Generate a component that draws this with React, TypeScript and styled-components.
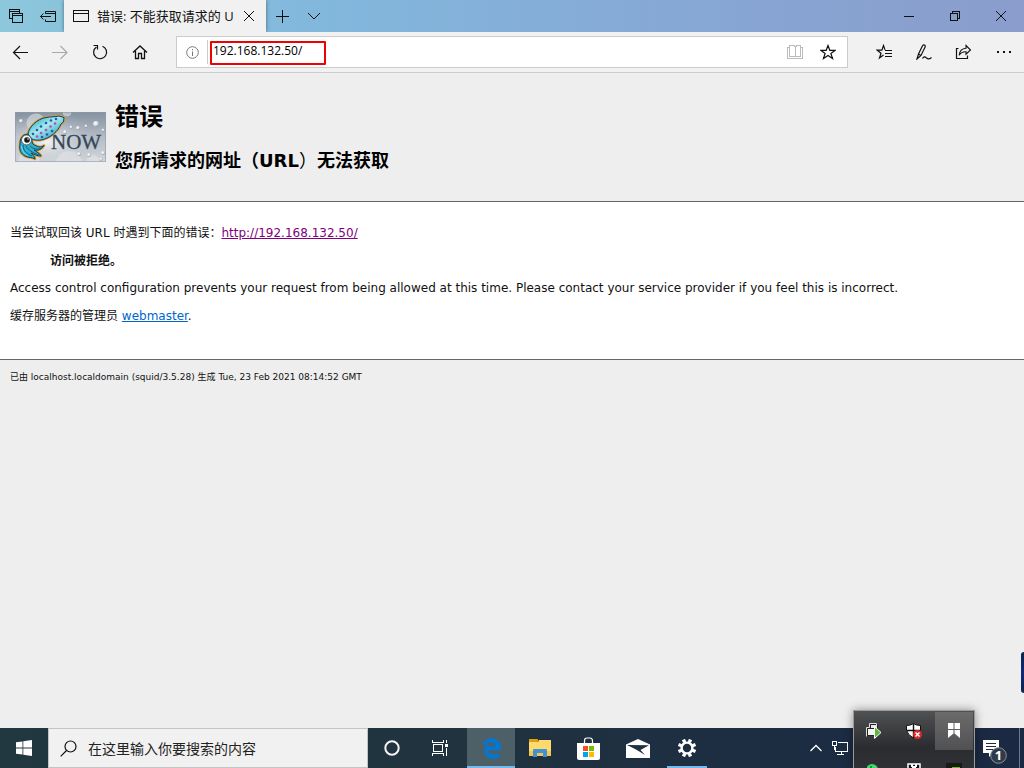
import React from "react";
import styled, { createGlobalStyle } from "styled-components";
import { FaEdgeLegacy } from "react-icons/fa6";

const GlobalStyle = createGlobalStyle`
  * { box-sizing: border-box; }
  html, body { margin: 0; padding: 0; }
  body {
    font-family: "DejaVu Sans", "Noto Sans CJK SC", sans-serif;
    font-size: 12px;
    color: #111;
    background: #eee;
  }
  button, input { font: inherit; color: inherit; border: 0; padding: 0; margin: 0; background: none; border-radius: 0; }
  svg { display: block; }
`;

const uiFont = `"Open Sans", "Noto Sans CJK SC", sans-serif`;

const Desktop = styled.div`
  position: relative;
  display: flex;
  flex-direction: column;
  min-height: 100vh;
  overflow: hidden;
`;

const TitleBar = styled.header`
  display: flex;
  height: 32px;
  background: linear-gradient(90deg, #8cc7dc 0%, #82b7dc 32%, #87a4d2 75%, #8a9dcc 100%);
  font-family: ${uiFont};
`;

const BarButton = styled.button<{ $width: number }>`
  display: flex;
  align-items: center;
  justify-content: center;
  width: ${(p) => p.$width}px;
  flex: none;
`;

const Tab = styled.div`
  display: flex;
  align-items: center;
  gap: 8px;
  width: 202px;
  padding: 0 11px 0 9px;
  background: #f1f1f1;
  box-shadow: 0 0 4px rgba(0, 0, 0, 0.45);
  font-size: 13px;
`;

const TabTitle = styled.span`
  flex: 1;
  overflow: hidden;
  white-space: nowrap;
  line-height: 20px;
`;

const Spacer = styled.div`
  flex: 1;
`;

const Toolbar = styled.nav`
  display: flex;
  position: relative;
  height: 41px;
  background: #f1f1f1;
  border-bottom: 1px solid #ccc;
`;

const AddressBar = styled.div`
  display: flex;
  flex: 1;
  margin: 4px 16px;
  padding-right: 2px;
  background: #fff;
  border: 1px solid #ccc;
`;

const Divider = styled.span`
  width: 1px;
  margin: 3px 2px 3px 0;
  background: #ccc;
`;

const AddressInput = styled.input`
  width: 116px;
  height: 24px;
  margin-top: 4px;
  padding: 0 0 6px 1px;
  border: 2px solid #f00000;
  border-radius: 1px;
  font-family: ${uiFont};
  font-size: 12px;
  color: #000;
  outline: none;
`;

const Page = styled.main`
  flex: 1;
`;

const Titles = styled.section`
  display: flex;
  align-items: center;
  gap: 9px;
  height: 128px;
  padding-left: 15px;
  color: #000;
`;

const Heading = styled.h1`
  margin: 0 0 16px;
  font-size: 24px;
  line-height: 32px;
`;

const SubHeading = styled.h2`
  margin: 0;
  font-size: 18px;
  line-height: 24px;
`;

const Light = styled.span`
  font-weight: 400;
`;

const Content = styled.section`
  padding: 23px 10px 35px;
  background: #fff;
  border-top: 1px solid #666;
  border-bottom: 1px solid #666;
`;

const Paragraph = styled.p`
  margin: 0 0 12px;
  line-height: 16px;
  &:last-child { margin-bottom: 0; }
`;

const Quote = styled.blockquote`
  margin: 0 40px 11px;
  line-height: 16px;
  font-weight: 700;
`;

const Link = styled.a<{ $visited?: boolean }>`
  color: ${(p) => (p.$visited ? "#800080" : "#0066cc")};
`;

const Footer = styled.footer`
  padding: 10px;
  font-size: 9px;
  line-height: 14px;
`;

const SideWidget = styled.div`
  position: absolute;
  right: 0;
  bottom: 75px;
  width: 3px;
  height: 41px;
  border-radius: 3px 0 0 3px;
  background: linear-gradient(#0c2350, #0c2a78 50%, #0c2350);
`;

const Taskbar = styled.footer`
  display: flex;
  height: 40px;
  background: linear-gradient(90deg, #213840 0%, #20333f 45%, #1c2d42 75%, #1b2943 100%);
  font-family: ${uiFont};
`;

const SearchBox = styled.label`
  display: flex;
  align-items: center;
  gap: 11px;
  width: 320px;
  padding-left: 11px;
  background: #f1f1f1;
  border: 1px solid #c4c4c4;
`;

const SearchInput = styled.input`
  flex: 1;
  min-width: 0;
  height: 24px;
  font-size: 14px;
  outline: none;
  &::placeholder { color: #222; opacity: 1; }
`;

const Apps = styled.div`
  display: flex;
  gap: 1px;
  padding-left: 3px;
`;

const AppButton = styled.button<{ $active?: boolean }>`
  display: flex;
  align-items: center;
  justify-content: center;
  width: 48px;
  background: ${(p) => (p.$active ? "#4d5f67" : "transparent")};
`;

const EdgeButton = styled(AppButton)`
  border-bottom: 2px solid #76b9ed;
  border-top: 2px solid transparent;
  color: #0078d7;
`;

const SettingsButton = styled(AppButton)`
  width: 40px;
  margin-left: 4px;
  border-bottom: 2px solid #76b9ed;
  border-top: 2px solid transparent;
`;

const TrayGap = styled.div`
  width: 123px;
`;

const ShowDesktop = styled.button`
  width: 5px;
  border-left: 1px solid #6d7889;
`;

const TrayPopup = styled.div`
  position: absolute;
  right: 49px;
  bottom: 0;
  display: grid;
  grid-template-columns: repeat(3, 40px);
  grid-auto-rows: 40px;
  width: 122px;
  height: 58px;
  overflow: hidden;
  border: 1px solid #9a9a9a;
  border-bottom: 0;
  background: linear-gradient(#505152 0, #36373a 26px, #2b2c30 36px, #303135 58px);
  box-shadow: 0 0 9px rgba(0, 0, 0, 0.4);
`;

const TrayCell = styled.button<{ $hover?: boolean }>`
  display: flex;
  align-items: center;
  justify-content: center;
  margin: 1px;
  background: ${(p) => (p.$hover ? "linear-gradient(#6b6b6b, #515154)" : "transparent")};
`;

type IconProps = { w: number; h: number; color?: string; crisp?: boolean; children: React.ReactNode };

const Icon = ({ w, h, color = "#111", crisp, children }: IconProps) => (
  <svg
    width={w}
    height={h}
    viewBox={`0 0 ${w} ${h}`}
    fill="none"
    stroke={color}
    shapeRendering={crisp ? "crispEdges" : undefined}
    aria-hidden="true"
  >
    {children}
  </svg>
);

const spots: [number, number][] = [
  [18, 22], [22, 18], [26, 14.5], [31, 11], [36, 8.5], [41, 7],
  [22, 24.5], [26, 21], [31, 18], [35.5, 14.5], [40, 11.5],
  [27, 25], [32, 22.5], [37, 19],
];

const mantle =
  "M13 22 C14 15 22 7 31 5.5 C36 4.5 40 5 44 4 L49 5.5 L48.5 10 L46 12 C43 19 36 26 26 28 C22 28.5 19 28 17 27 Z";
const arms =
  "M9 23 C6 25 5 28 5 32 C4 38 6 42 10 44 C14 46 17 45 20 47 C20 44 17 43 16 41 C20 43 23 44 26 44 C25 41 21 40 19 38 C23 39 27 37 29 33.5 C26 36 22 35 18 32 C17 31 17 29 17 27 L13 22 Z";

const SquidLogo = () => (
  <svg width="91" height="50" viewBox="0 0 91 50" role="img" aria-label="Squid Now">
    <defs>
      <linearGradient id="sky" x1="0" y1="0" x2="0" y2="1">
        <stop offset="0" stopColor="#8491a0" />
        <stop offset="0.5" stopColor="#b4bcc5" />
        <stop offset="1" stopColor="#d3d6da" />
      </linearGradient>
      <radialGradient id="glow" cx="0.35" cy="0.6" r="0.6">
        <stop offset="0" stopColor="#f4f5f6" stopOpacity="0.95" />
        <stop offset="1" stopColor="#aeb7c0" stopOpacity="0" />
      </radialGradient>
      <radialGradient id="bubble" cx="0.4" cy="0.35" r="0.65">
        <stop offset="0" stopColor="#fff" />
        <stop offset="0.6" stopColor="#d5dae0" />
        <stop offset="1" stopColor="#8c98a6" />
      </radialGradient>
      <linearGradient id="skin" x1="0" y1="0" x2="1" y2="1">
        <stop offset="0.1" stopColor="#2ba9c6" />
        <stop offset="0.45" stopColor="#a5ecee" />
        <stop offset="0.9" stopColor="#2396b8" />
      </linearGradient>
    </defs>
    <rect width="91" height="50" fill="url(#sky)" />
    <rect width="91" height="50" fill="url(#glow)" />
    <g fill="#e6e9ec" fillOpacity="0.5" stroke="#d0d5da" strokeWidth="0.7">
      <circle cx="21" cy="11" r="9" />
      <circle cx="54" cy="53" r="14" />
      <circle cx="14" cy="50" r="11" />
      <circle cx="78" cy="50" r="7" />
      <circle cx="52" cy="0" r="4" />
    </g>
    <g fill="url(#bubble)">
      <circle cx="6" cy="9" r="2" />
      <circle cx="81" cy="12" r="3" />
      <circle cx="63" cy="16" r="2" />
      <circle cx="71" cy="14" r="1.5" />
      <circle cx="56" cy="15" r="1.5" />
      <circle cx="50" cy="20" r="2" />
      <circle cx="88" cy="18" r="1.5" />
      <circle cx="64" cy="42" r="2" />
      <circle cx="74" cy="43" r="2" />
      <circle cx="88" cy="41" r="2" />
      <circle cx="86" cy="47" r="1.5" />
    </g>
    <text x="36" y="37" fontFamily="Liberation Serif, serif" fontSize="21" fill="#34465a" stroke="#34465a" strokeWidth="0.3">NOW</text>
    <g stroke="#e0a02c" strokeWidth="2.6" strokeLinejoin="round" fill="none">
      <path d={arms} />
      <path d={mantle} />
    </g>
    <g stroke="#12405e" strokeWidth="1" strokeLinejoin="round">
      <path d={arms} fill="#2fb0cf" />
      <path d={mantle} fill="url(#skin)" />
    </g>
    <path d="M8 33 C8 39 12 42 17 44 M11 34 C13 38 18 41 24 43 M15 34 C18 37 23 38 27 36" fill="none" stroke="#155c86" strokeWidth="1" />
    <path d="M6.5 34 C7 39 9 42 13 43.5" fill="none" stroke="#8be4ee" strokeWidth="0.8" />
    <g>
      {spots.map(([x, y], i) => (
        <circle key={i} cx={x} cy={y} r="1.3" fill={i > 5 && i < 11 ? "#b04fb8" : "#3257ae"} />
      ))}
    </g>
    <circle cx="11.5" cy="28" r="5" fill="#f5f5f2" stroke="#3c4a50" strokeWidth="0.8" />
    <circle cx="12" cy="28" r="2.8" fill="#17181a" />
    <circle cx="13" cy="27" r="0.8" fill="#fff" />
    <rect x="0.5" y="0.5" width="90" height="49" fill="none" stroke="#8f9ba8" strokeOpacity="0.6" />
  </svg>
);

const star = "M8 1.5 L9.8 6.3 L15 6.4 L10.9 9.5 L12.5 14.5 L8 11.5 L3.5 14.5 L5.1 9.5 L1 6.4 L6.2 6.3 Z";

export default function App() {
  return (
    <Desktop>
      <GlobalStyle />
      <TitleBar>
        <BarButton $width={32} aria-label="已搁置的标签页">
          <Icon w={16} h={16} crisp>
            <path d="M4.5 10.5H1.5V1.5H11.5V4.5 M1.5 3.5H11.5" />
            <path d="M4.5 5.5H14.5V14.5H4.5Z M4.5 7.5H14.5" />
          </Icon>
        </BarButton>
        <BarButton $width={32} aria-label="搁置标签页">
          <Icon w={16} h={16}>
            <path d="M5.5 5.5V3.5H15.5V13.5H5.5V11.5 M5.5 5.5H15.5 M.5 8.5H11 M3.5 5.5L.5 8.5L3.5 11.5" />
          </Icon>
        </BarButton>
        <Tab>
          <Icon w={16} h={14} crisp>
            <path d="M.5 1.5H15.5V12.5H.5Z M.5 4.5H15.5" />
          </Icon>
          <TabTitle>错误: 不能获取请求的 U</TabTitle>
          <button aria-label="关闭标签页">
            <Icon w={12} h={12}><path d="M1 1L11 11M11 1L1 11" /></Icon>
          </button>
        </Tab>
        <BarButton $width={32} aria-label="新建标签页">
          <Icon w={13} h={13} crisp><path d="M6.5 0V13M0 6.5H13" /></Icon>
        </BarButton>
        <BarButton $width={32} aria-label="标签页预览">
          <Icon w={14} h={8}><path d="M1 1L7 7L13 1" /></Icon>
        </BarButton>
        <Spacer />
        <BarButton $width={46} aria-label="最小化">
          <Icon w={10} h={10} crisp><path d="M0 5.5H10" /></Icon>
        </BarButton>
        <BarButton $width={46} aria-label="还原">
          <Icon w={10} h={10} crisp><path d="M.5 2.5H7.5V9.5H.5Z M2.5 2.5V.5H9.5V7.5H7.5" /></Icon>
        </BarButton>
        <BarButton $width={46} aria-label="关闭">
          <Icon w={10} h={10}><path d="M0 0L10 10M10 0L0 10" /></Icon>
        </BarButton>
      </TitleBar>

      <Toolbar>
        <BarButton $width={40} aria-label="后退">
          <Icon w={16} h={16}><path d="M1.5 8.5H16 M8 2L1.5 8.5L8 15" strokeWidth="1.2" /></Icon>
        </BarButton>
        <BarButton $width={40} aria-label="前进">
          <Icon w={16} h={16} color="#aaa"><path d="M0 8.5H15 M8.5 2L15 8.5L8.5 15" strokeWidth="1.2" /></Icon>
        </BarButton>
        <BarButton $width={40} aria-label="刷新">
          <Icon w={16} h={16}><path d="M10.5 2.2A6.5 6.5 0 1 1 4.4 2.9 M1.5 1.5H5.5V5.5" strokeWidth="1.2" /></Icon>
        </BarButton>
        <BarButton $width={40} aria-label="主页">
          <Icon w={16} h={16}><path d="M1 8.5L8 2L15 8.5 M3.5 7V14.5H6.5V9.5H9.5V14.5H12.5V7" strokeWidth="1.3" /></Icon>
        </BarButton>
        <AddressBar>
          <BarButton $width={30} aria-label="网站信息">
            <Icon w={13} h={13} color="#777">
              <circle cx="6.5" cy="6.5" r="5.8" />
              <path d="M6.5 5.5V10M6.5 3V4.3" />
            </Icon>
          </BarButton>
          <Divider />
          <AddressInput aria-label="地址" defaultValue="192.168.132.50/" />
          <Spacer />
          <BarButton $width={32} aria-label="阅读视图">
            <Icon w={16} h={16} color="#bbb" crisp>
              <path d="M2.5 1.5H6.5L8.5 2.5L10.5 1.5H13.5V12.5H2.5Z M8.5 2V13 M2.5 3.5H.5V14.5H15.5V3.5H13.5" />
            </Icon>
          </BarButton>
          <BarButton $width={34} aria-label="添加到收藏夹">
            <Icon w={16} h={16}><path d={star} strokeWidth="1.2" /></Icon>
          </BarButton>
        </AddressBar>
        <BarButton $width={40} aria-label="收藏夹中心">
          <Icon w={16} h={16}>
            <path d="M9 5.9L7.5 1.5L5.9 6.2H1.3L5 9.2L3.5 14L7.5 11" strokeWidth="1.2" />
            <path d="M9 6.5H16M9 9.5H16M9 12.5H16" strokeWidth="1.2" />
          </Icon>
        </BarButton>
        <BarButton $width={40} aria-label="添加笔记">
          <Icon w={16} h={16}>
            <path
              d="M1 15L2.5 10L6.5 1.8Q7.5 .2 8.8 1.2Q9.6 2 9 3.2L5 11.5L1 15Z M2.5 10L5 11.5 M6.5 14.5Q8.5 11.5 10.5 14Q12.5 16 15.5 13.5"
              strokeWidth="1.2"
            />
          </Icon>
        </BarButton>
        <BarButton $width={39} aria-label="共享">
          <Icon w={17} h={16}>
            <path d="M3.5 4.5H1.5V14.5H12.5V11.5" strokeWidth="1.2" />
            <path d="M11 1.5L15.5 6L11 10.2V7.8Q6.5 7.5 4.2 11.2Q4.8 4.6 11 4.2Z" strokeWidth="1.1" />
          </Icon>
        </BarButton>
        <BarButton $width={41} aria-label="更多">
          <Icon w={16} h={4}>
            <path d="M1 2H3M7 2H9M13 2H15" strokeWidth="2" />
          </Icon>
        </BarButton>
      </Toolbar>

      <Page>
        <Titles>
          <SquidLogo />
          <div>
            <Heading>错误</Heading>
            <SubHeading>您所请求的网址（URL<Light>）</Light>无法获取</SubHeading>
          </div>
        </Titles>
        <Content>
          <Paragraph>
            当尝试取回该 URL 时遇到下面的错误：<Link $visited href="http://192.168.132.50/">http://192.168.132.50/</Link>
          </Paragraph>
          <Quote>访问被拒绝。</Quote>
          <Paragraph>
            Access control configuration prevents your request from being allowed at this time. Please contact your service provider if you feel this is incorrect.
          </Paragraph>
          <Paragraph>
            缓存服务器的管理员 <Link href="mailto:webmaster">webmaster</Link>.
          </Paragraph>
        </Content>
        <Footer>已由 localhost.localdomain (squid/3.5.28) 生成 Tue, 23 Feb 2021 08:14:52 GMT</Footer>
      </Page>

      <SideWidget />

      <Taskbar>
        <BarButton $width={48} aria-label="开始">
          <Icon w={16} h={16} color="none">
            <path fill="#fff" d="M0 2.3L6.5 1.4V7.6H0Z M7.3 1.2L16 0V7.6H7.3Z M0 8.4H6.5V14.6L0 13.7Z M7.3 8.4H16V16L7.3 14.8Z" />
          </Icon>
        </BarButton>
        <SearchBox>
          <Icon w={17} h={17}>
            <circle cx="10.5" cy="6.5" r="5.5" strokeWidth="1.2" />
            <path d="M6.5 10.5L.7 16.3" strokeWidth="1.2" />
          </Icon>
          <SearchInput aria-label="搜索" placeholder="在这里输入你要搜索的内容" />
        </SearchBox>
        <BarButton $width={48} aria-label="Cortana">
          <Icon w={16} h={16} color="#f4f4f4"><circle cx="8" cy="8" r="6.7" strokeWidth="2" /></Icon>
        </BarButton>
        <BarButton $width={48} aria-label="任务视图">
          <Icon w={17} h={16} color="#fff" crisp>
            <path d="M.5 0V2.5H11.5V0 M.5 16V13.5H11.5V16 M1.5 4.5H10.5V11.5H1.5Z M14.5 0V3 M14.5 8V16" />
            <path d="M13 4H16V7H13Z" fill="#fff" stroke="none" />
          </Icon>
        </BarButton>
        <Apps>
          <EdgeButton $active aria-label="Microsoft Edge"><FaEdgeLegacy size={21} /></EdgeButton>
          <AppButton aria-label="文件资源管理器">
            <Icon w={22} h={18} color="none">
              <path fill="#ffd96b" d="M0 3H9L10 1H22V17H0Z" />
              <path fill="#f5c451" d="M0 12H22V17H0Z" />
              <path fill="#e0a010" d="M0 0H8.5L9.5 1.5L8.5 3H0Z" />
              <path fill="#3f92d6" d="M4 18V11Q4 10 5 10H17Q18 10 18 11V18H14V14H8V18Z" />
            </Icon>
          </AppButton>
          <AppButton aria-label="Microsoft Store">
            <Icon w={24} h={23} color="none">
              <path stroke="#fff" strokeWidth="1.2" d="M7.5 6V4Q7.5 1 10 1H13Q15.5 1 15.5 4V6" />
              <path fill="#fff" d="M0 6H23V21Q23 23 21 23H2Q0 23 0 21Z" />
              <path fill="#f25022" d="M6 9H11V14H6Z" />
              <path fill="#7fba00" d="M12 9H17V14H12Z" />
              <path fill="#00a4ef" d="M6 15H11V20H6Z" />
              <path fill="#ffb900" d="M12 15H17V20H12Z" />
            </Icon>
          </AppButton>
          <AppButton aria-label="邮件">
            <Icon w={24} h={19} color="none">
              <path fill="#fff" d="M0 5.5L12 0L24 5.5V19H0Z" />
              <path fill="#1f303f" d="M1 6L23 6.2L14.5 11L19 16L10.5 10.8Z" />
            </Icon>
          </AppButton>
          <SettingsButton aria-label="设置">
            <Icon w={18} h={18} color="#fff">
              <circle cx="9" cy="9" r="5.4" strokeWidth="2.4" />
              <g strokeWidth="3.4">
                {[22.5, 67.5, 112.5, 157.5, 202.5, 247.5, 292.5, 337.5].map((a) => (
                  <path key={a} d="M9 -.2V3" transform={`rotate(${a} 9 9)`} />
                ))}
              </g>
            </Icon>
          </SettingsButton>
        </Apps>
        <Spacer />
        <BarButton $width={24} aria-label="显示隐藏的图标">
          <Icon w={12} h={8} color="#fff"><path d="M.5 7L6 1.5L11.5 7" strokeWidth="1.3" /></Icon>
        </BarButton>
        <BarButton $width={24} aria-label="网络">
          <Icon w={16} h={14} color="#fff" crisp>
            <path d="M6 1.5H15.5V10.5H3.5V6 M9.5 11V13.5 M5 13.5H12 M.5 .5H4.5V4.5H.5Z M2.5 5V9" />
          </Icon>
        </BarButton>
        <TrayGap />
        <BarButton $width={44} aria-label="通知">
          <Icon w={28} h={32} color="none">
            <path fill="#fff" d="M0 8H16V21H10L6 25V21H0Z" />
            <path stroke="#1b2943" d="M3 11.5H13M3 14.5H13M3 17.5H10" />
            <circle cx="15.5" cy="23.5" r="7.8" fill="#303a4a" stroke="#8b929c" />
            <text x="15.5" y="28" textAnchor="middle" fontSize="13" fontWeight="700" fill="#fff">1</text>
          </Icon>
        </BarButton>
        <ShowDesktop aria-label="显示桌面" />
      </Taskbar>

      <TrayPopup>
        <TrayCell aria-label="虚拟机工具">
          <Icon w={16} h={16} color="none">
            <path fill="#e8e8e8" stroke="#222" d="M4.5 1.5H11.5V8.5H4.5Z" />
            <path fill="#f4f4f4" stroke="#222" d="M1.5 5.5H8.5V12.5H1.5Z" />
            <path stroke="#ddd" d="M.5 13.5V4.5H3.5V.5H10.5V4" />
            <path fill="#5ab738" stroke="#fff" d="M8.5 3.5L15 9.5L8.5 15.5Z" />
          </Icon>
        </TrayCell>
        <TrayCell aria-label="安全中心">
          <Icon w={16} h={16} color="none">
            <path fill="#fff" stroke="#111" d="M7.5 .5Q10 2.5 14.5 2.5V7Q13.5 12 7.5 15Q1.5 12 .5 7V2.5Q5 2.5 7.5 .5Z" />
            <path stroke="#111" strokeWidth="1.4" d="M7.5 1V15M1 7.5H14" />
            <circle cx="11.5" cy="11.5" r="4.5" fill="#dc2626" />
            <path stroke="#fff" strokeWidth="1.4" d="M9.5 9.5L13.5 13.5M13.5 9.5L9.5 13.5" />
          </Icon>
        </TrayCell>
        <TrayCell $hover aria-label="书签">
          <Icon w={12} h={16} color="none">
            <path fill="#fff" d="M0 0H5.5V6H0Z M6.5 0H12V6H6.5Z M0 7H5.5V10.5L0 15Z M6.5 7H12V15L6.5 10.5Z" />
          </Icon>
        </TrayCell>
        <TrayCell aria-label="聊天">
          <Icon w={14} h={14} color="none"><circle cx="5" cy="6" r="6" fill="#3ddc6c" /><circle cx="4" cy="3" r="1" fill="#176b32" /></Icon>
        </TrayCell>
        <TrayCell aria-label="存储">
          <Icon w={14} h={16} color="none">
            <path fill="#111" stroke="#fff" strokeWidth="1.5" d="M1 1H13V15H1Z" />
            <path fill="#fff" d="M4 1H6V4H4Z M8 1H10V4H8Z M5 3H9V6H5Z" />
          </Icon>
        </TrayCell>
        <TrayCell aria-label="显卡设置">
          <Icon w={16} h={16} color="none"><path fill="#171a18" d="M0 0H16V16H0Z" /><path fill="#76b900" d="M6 4H14V12H6Z" /></Icon>
        </TrayCell>
      </TrayPopup>
    </Desktop>
  );
}
